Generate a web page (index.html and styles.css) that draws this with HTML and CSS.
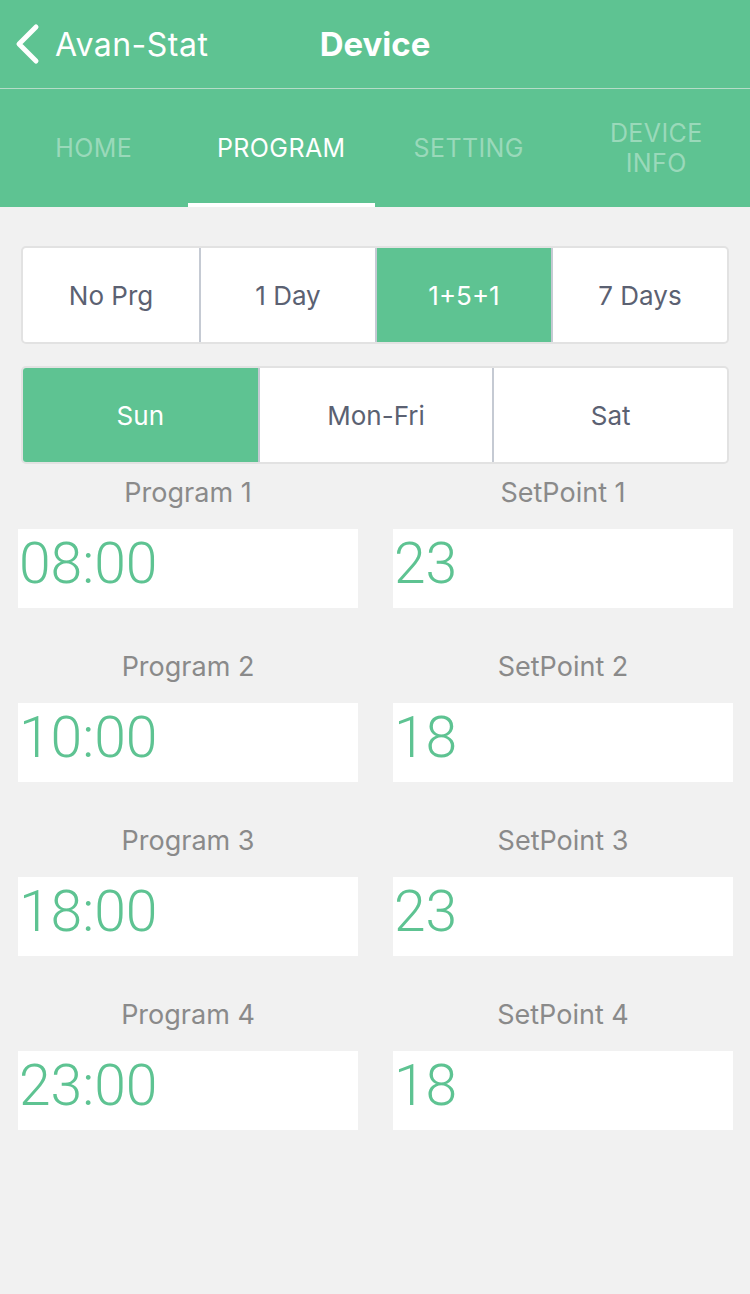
FILE: index.html
```html
<!DOCTYPE html>
<html>
<head>
<meta charset="utf-8">
<link rel="stylesheet" href="styles.css">
</head>
<body>
<header class="navbar">
  <div class="back">
    <svg class="chev" width="28" height="44" viewBox="0 0 28 44"><path d="M22 5 L5 22 L22 39" fill="none" stroke="#fff" stroke-width="5" stroke-linecap="round" stroke-linejoin="round"/></svg>
    <span class="back-text">Avan-Stat</span>
  </div>
  <div class="title">Device</div>
</header>
<nav class="tabs">
  <div class="tab">HOME</div>
  <div class="tab active">PROGRAM</div>
  <div class="tab">SETTING</div>
  <div class="tab">DEVICE<br>INFO</div>
</nav>
<main class="content">
  <div class="seg seg4">
    <div class="seg-item">No Prg</div>
    <div class="seg-item">1 Day</div>
    <div class="seg-item on">1+5+1</div>
    <div class="seg-item">7 Days</div>
  </div>
  <div class="seg seg3">
    <div class="seg-item on">Sun</div>
    <div class="seg-item">Mon-Fri</div>
    <div class="seg-item">Sat</div>
  </div>
  <div class="grid">
    <div class="cell"><div class="label">Program 1</div><div class="box">08:00</div></div>
    <div class="cell"><div class="label">SetPoint 1</div><div class="box">23</div></div>
    <div class="cell"><div class="label">Program 2</div><div class="box">10:00</div></div>
    <div class="cell"><div class="label">SetPoint 2</div><div class="box">18</div></div>
    <div class="cell"><div class="label">Program 3</div><div class="box">18:00</div></div>
    <div class="cell"><div class="label">SetPoint 3</div><div class="box">23</div></div>
    <div class="cell"><div class="label">Program 4</div><div class="box">23:00</div></div>
    <div class="cell"><div class="label">SetPoint 4</div><div class="box">18</div></div>
  </div>
</main>
</body>
</html>
```
FILE: styles.css
```css
* { box-sizing: border-box; }
html, body { margin: 0; padding: 0; }
body {
  width: 750px;
  height: 1294px;
  background: #f1f1f1;
  font-family: "Inter", "Roboto", sans-serif;
  overflow: hidden;
}
.navbar {
  height: 89px;
  background: #5ec392;
  border-bottom: 1px solid #b5dcc8;
  position: relative;
  display: flex;
  align-items: center;
  color: #fff;
}
.back {
  display: flex;
  align-items: center;
  padding-left: 14px;
  gap: 13px;
}
.chev { display: block; }
.back-text {
  font-size: 32px;
  font-weight: 400;
  letter-spacing: 0.5px;
}
.title {
  position: absolute;
  left: 0; right: 0;
  top: 0; bottom: 0;
  display: flex;
  align-items: center;
  justify-content: center;
  font-size: 33px;
  font-weight: 700;
  pointer-events: none;
}
.tabs {
  height: 118px;
  background: #5ec392;
  display: grid;
  grid-template-columns: repeat(4, 1fr);
}
.tab {
  display: flex;
  align-items: center;
  justify-content: center;
  text-align: center;
  font-size: 25px;
  line-height: 30px;
  color: rgba(255,255,255,0.38);
  letter-spacing: 0.4px;
  border-bottom: 4px solid transparent;
  padding-top: 4px;
}
.tab.active {
  color: #fff;
  border-bottom-color: #fff;
}
.content {
  padding-top: 39px;
}
.seg {
  margin: 0 21px;
  height: 98px;
  background: #fff;
  border: 2px solid #e2e2e2;
  border-radius: 5px;
  display: grid;
  overflow: hidden;
}
.seg4 { grid-template-columns: repeat(4, 1fr); }
.seg3 { grid-template-columns: repeat(3, 1fr); margin-top: 22px; }
.seg-item {
  display: flex;
  align-items: center;
  justify-content: center;
  font-size: 26px;
  color: #5b6172;
  border-left: 2px solid #c5cad3;
}
.seg-item:first-child { border-left: none; }
.seg-item.on {
  background: #5ec392;
  color: #fff;
}
.grid {
  display: grid;
  grid-template-columns: 340px 340px;
  column-gap: 35px;
  row-gap: 41px;
  padding-left: 18px;
  margin-top: 11px;
}
.label {
  height: 36px;
  line-height: 36px;
  text-align: center;
  font-size: 27px;
  color: #8a8a8a;
}
.box {
  margin-top: 18px;
  height: 79px;
  background: #fff;
  color: #5ec392;
  font-family: "Roboto", "Inter", sans-serif;
  font-size: 57px;
  font-weight: 300;
  line-height: 70px;
  padding-left: 1px;
}
```
